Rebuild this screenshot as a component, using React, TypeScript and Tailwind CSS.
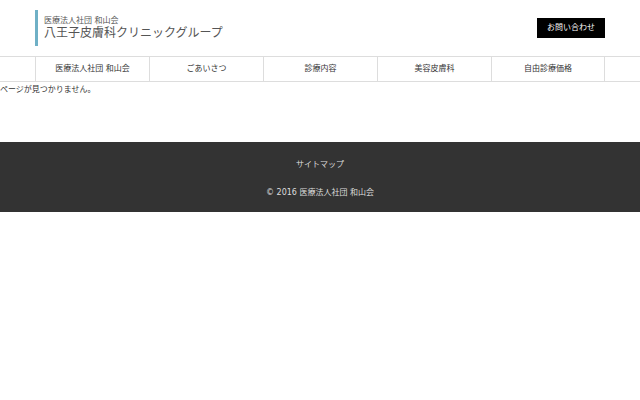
const font = { fontFamily: '"DejaVu Sans", "Noto Sans CJK JP", sans-serif' }

const NAV = ['医療法人社団 和山会', 'ごあいさつ', '診療内容', '美容皮膚科', '自由診療価格']

export default function App() {
  return (
    <div className="bg-white text-[#333]" style={font}>
      {/* Header */}
      <header className="w-[570px] mx-auto pt-[10px] flex justify-between">
        <div className="border-l-[3px] border-[#6fb0c6] pl-[6px] h-[36px] flex flex-col justify-center">
          <div className="text-[8px] leading-[10px] text-[#555]">医療法人社団 和山会</div>
          <div className="text-[12px] leading-[15px] text-[#555]">八王子皮膚科クリニックグループ</div>
        </div>
        <a className="mt-[8px] w-[68px] h-[20px] bg-black text-white text-[8px] flex items-center justify-center">
          お問い合わせ
        </a>
      </header>

      {/* Global nav */}
      <nav className="mt-[10px] border-y border-[#ddd]">
        <ul className="w-[570px] mx-auto flex">
          {NAV.map((item, i) => (
            <li
              key={item}
              className={`w-[114px] h-[24px] flex items-center justify-center text-[8px] text-[#333] border-l border-[#ddd] ${i === NAV.length - 1 ? 'border-r' : ''}`}
            >
              {item}
            </li>
          ))}
        </ul>
      </nav>

      {/* Content */}
      <main className="h-[60px] pt-[2px]">
        <p className="text-[8px] leading-[12px] text-[#333]">ページが見つかりません。</p>
      </main>

      {/* Footer */}
      <footer className="bg-[#333] h-[70px] flex flex-col items-center pt-[17px] text-[8px] text-[#ddd]">
        <div className="leading-[12px]">サイトマップ</div>
        <div className="leading-[12px] mt-[16px]">© 2016 医療法人社団 和山会</div>
      </footer>
    </div>
  )
}
